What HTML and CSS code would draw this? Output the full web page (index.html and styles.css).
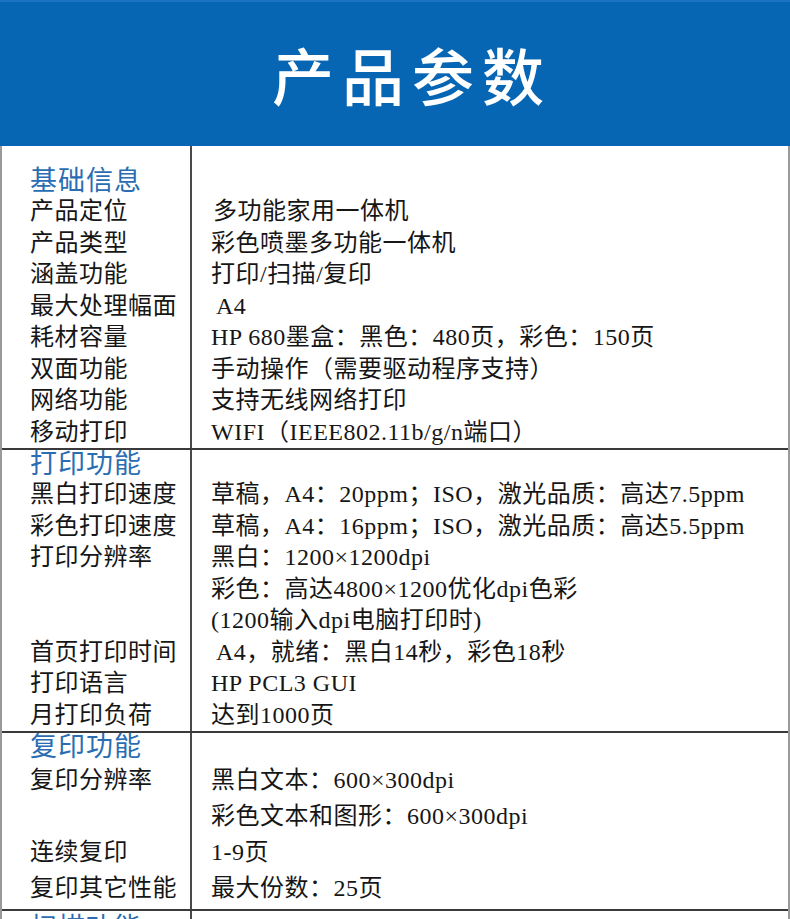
FILE: index.html
```html
<!DOCTYPE html>
<html lang="zh-CN">
<head>
<meta charset="utf-8">
<title>产品参数</title>
<link rel="stylesheet" href="styles.css">
</head>
<body>
<div class="page">
  <header class="banner">
    <h1 class="title">产品参数</h1>
  </header>
  <div class="specs">
    <section class="sec sec-first">
      <div class="lab head">基础信息</div><div class="val"></div>
      <div class="lab">产品定位</div><div class="val"><span class="ind-s">多功能家用一体机</span></div>
      <div class="lab">产品类型</div><div class="val">彩色喷墨多功能一体机</div>
      <div class="lab">涵盖功能</div><div class="val">打印/扫描/复印</div>
      <div class="lab">最大处理幅面</div><div class="val"><span class="ind">A4</span></div>
      <div class="lab">耗材容量</div><div class="val">HP 680墨盒：黑色：480页，彩色：150页</div>
      <div class="lab">双面功能</div><div class="val">手动操作（需要驱动程序支持）</div>
      <div class="lab">网络功能</div><div class="val">支持无线网络打印</div>
      <div class="lab">移动打印</div><div class="val">WIFI（IEEE802.11b/g/n端口）</div>
    </section>
    <section class="sec">
      <div class="lab head">打印功能</div><div class="val"></div>
      <div class="lab">黑白打印速度</div><div class="val">草稿，A4：20ppm；ISO，激光品质：高达7.5ppm</div>
      <div class="lab">彩色打印速度</div><div class="val">草稿，A4：16ppm；ISO，激光品质：高达5.5ppm</div>
      <div class="lab">打印分辨率</div>
      <div class="val">
        <div class="ln">黑白：1200×1200dpi</div>
        <div class="ln">彩色：高达4800×1200优化dpi色彩</div>
        <div class="ln">(1200输入dpi电脑打印时)</div>
      </div>
      <div class="lab">首页打印时间</div><div class="val"><span class="ind">A4，就绪：黑白14秒，彩色18秒</span></div>
      <div class="lab">打印语言</div><div class="val">HP PCL3 GUI</div>
      <div class="lab">月打印负荷</div><div class="val">达到1000页</div>
    </section>
    <section class="sec sec-tall">
      <div class="lab head">复印功能</div><div class="val"></div>
      <div class="lab">复印分辨率</div>
      <div class="val">
        <div class="ln">黑白文本：600×300dpi</div>
        <div class="ln">彩色文本和图形：600×300dpi</div>
      </div>
      <div class="lab">连续复印</div><div class="val">1-9页</div>
      <div class="lab">复印其它性能</div><div class="val">最大份数：25页</div>
    </section>
    <section class="sec sec-last">
      <div class="lab head">扫描功能</div><div class="val"></div>
    </section>
  </div>
</div>
</body>
</html>
```

FILE: styles.css
```css
html, body {
  margin: 0;
  padding: 0;
  background: #ffffff;
}

.page {
  width: 790px;
  height: 919px;
  overflow: hidden;
  font-family: "Liberation Serif", "Noto Sans CJK SC", serif;
  color: #161616;
}

.banner {
  height: 146px;
  background: #0766b4;
  border-top: 2px solid #1b74c2;
  box-sizing: border-box;
  display: flex;
  align-items: center;
  justify-content: center;
}

.title {
  margin: 0;
  padding-left: 34px;
  font-family: "Noto Sans CJK SC", sans-serif;
  font-size: 62px;
  font-weight: 500;
  letter-spacing: 8px;
  color: #ffffff;
  line-height: 1;
}

.specs {
  border-left: 2px solid #9a9a9a;
  border-right: 2px solid #9a9a9a;
}

.sec {
  display: grid;
  grid-template-columns: 190px 1fr;
  border-bottom: 2px solid #3a3a3a;
  font-size: 24px;
  letter-spacing: 0.5px;
  line-height: 31.5px;
}

.lab {
  padding-left: 28px;
  border-right: 2px solid #4a4a4a;
  white-space: nowrap;
}

.val {
  padding-left: 19px;
  white-space: nowrap;
}

.sec-first > div:nth-child(-n+2) {
  padding-top: 21px;
}

.head {
  color: #2a6db3;
  font-size: 27px;
  letter-spacing: 1px;
  line-height: 29px;
}

.val:empty {
  line-height: 29px;
}

.ind {
  padding-left: 5px;
}

.ind-s {
  padding-left: 2px;
}

.sec-tall {
  line-height: 36px;
  padding-bottom: 0;
}

.sec-tall .head {
  line-height: 29px;
}

.sec-tall .lab:last-of-type,
.sec-tall .val:last-child {
  padding-bottom: 3px;
}

.sec-last {
  border-bottom: none;
  height: 40px;
}

.sec-last .head {
  padding-top: 3px;
}
```
